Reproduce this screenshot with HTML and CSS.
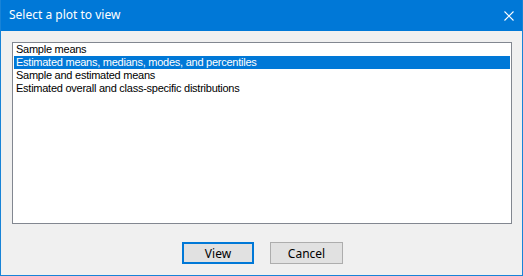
FILE: index.html
```html
<!DOCTYPE html>
<html lang="en">
<head>
    <meta charset="UTF-8">
    <title>Select a plot to view</title>
    <link rel="stylesheet" href="styles.css">
</head>
<body>
    <div class="window">
        <div class="title-bar">
            <span class="title">Select a plot to view</span>
            <span class="close-btn">
                <svg width="10" height="10" viewBox="0 0 10 10">
                    <path d="M0.5 0.5 L9.5 9.5 M9.5 0.5 L0.5 9.5" stroke="#ffffff" stroke-width="1.1" fill="none"/>
                </svg>
            </span>
        </div>

        <div class="content">
            <!-- plot list -->
            <ul class="plot-list">
                <li>Sample means</li>
                <li class="selected">Estimated means, medians, modes, and percentiles</li>
                <li>Sample and estimated means</li>
                <li>Estimated overall and class-specific distributions</li>
            </ul>

            <div class="buttons">
                <button class="btn btn-default">View</button>
                <button class="btn">Cancel</button>
            </div>
        </div>
    </div>
</body>
</html>
```

FILE: styles.css
```css
body {
    margin: 0;
    padding: 0;
    background: #f0f0f0;
}

.window {
    width: 523px;
    height: 276px;
    box-sizing: border-box;
    border: 1px solid #1883d7;
    border-top: none;
    background: #f0f0f0;
    display: flex;
    flex-direction: column;
}

.title-bar {
    height: 31px;
    background: #0078d7;
    display: flex;
    align-items: center;
    justify-content: space-between;
    padding: 0 7px 0 8px;
    color: #ffffff;
    font-family: "Noto Sans", sans-serif;
    font-size: 12px;
}

.title {
    position: relative;
    top: -1px;
}

.close-btn {
    display: flex;
    width: 10px;
    height: 10px;
    margin-right: 1px;
}

.content {
    padding: 11px 10px 0 11px;
}

.plot-list {
    list-style: none;
    margin: 0;
    padding: 0 1px;
    width: 500px;
    height: 182px;
    box-sizing: border-box;
    border: 1px solid #828790;
    background: #ffffff;
    font-family: "Liberation Sans", Arial, sans-serif;
    font-size: 11px;
    letter-spacing: -0.25px;
}

.plot-list li {
    height: 13px;
    line-height: 13px;
    padding-left: 2px;
    color: #000000;
    white-space: nowrap;
}

.plot-list li.selected {
    background: #0078d7;
    color: #ffffff;
}

.buttons {
    display: flex;
    justify-content: center;
    gap: 16px;
    margin-top: 18px;
    padding-left: 1px;
}

.btn {
    width: 73px;
    height: 22px;
    box-sizing: border-box;
    border: 1px solid #adadad;
    background: #e1e1e1;
    font-family: "Noto Sans", sans-serif;
    font-size: 12px;
    color: #000000;
    padding: 0;
}

.btn-default {
    border: 2px solid #0078d7;
    width: 72px;
}
```
